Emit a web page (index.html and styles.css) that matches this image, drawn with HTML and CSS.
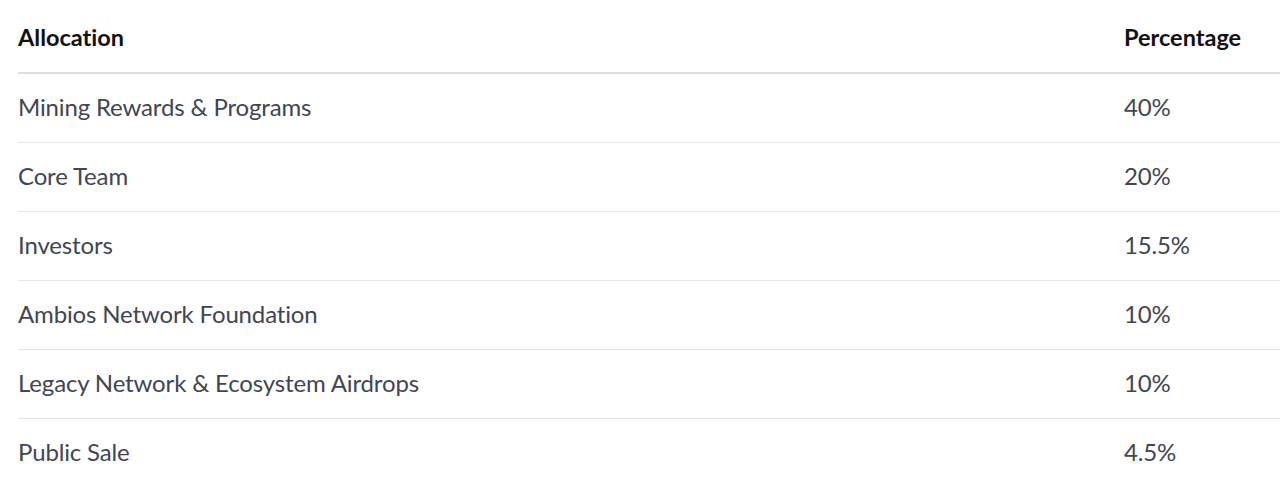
FILE: index.html
```html
<!DOCTYPE html>
<html lang="en">
<head>
<meta charset="utf-8">
<title>Allocation</title>
<link rel="stylesheet" href="styles.css">
</head>
<body>
<table class="alloc">
  <thead>
    <tr><th class="col-name">Allocation</th><th class="col-pct">Percentage</th></tr>
  </thead>
  <tbody>
    <tr><td>Mining Rewards &amp; Programs</td><td>40%</td></tr>
    <tr><td>Core Team</td><td>20%</td></tr>
    <tr><td>Investors</td><td>15.5%</td></tr>
    <tr><td>Ambios Network Foundation</td><td>10%</td></tr>
    <tr><td>Legacy Network &amp; Ecosystem Airdrops</td><td>10%</td></tr>
    <tr><td>Public Sale</td><td>4.5%</td></tr>
  </tbody>
</table>
</body>
</html>
```
FILE: styles.css
```css
html, body {
  margin: 0;
  padding: 0;
  background: #ffffff;
}
body {
  padding-left: 18px;
  font-family: "Lato", "Liberation Sans", sans-serif;
  font-variant-ligatures: none;
}
.alloc {
  width: 100%;
  border-collapse: collapse;
}
.alloc th {
  text-align: left;
  font-weight: 700;
  font-size: 23.5px;
  color: #111111;
  letter-spacing: 0;
  line-height: 32px;
  padding: 21px 0 19px 0;
  border-bottom: 2px solid #dedede;
}
.alloc .col-pct {
  width: 156px;
}
.alloc td {
  font-size: 24px;
  color: #414652;
  line-height: 32px;
  padding: 17px 0 19px 0;
  border-bottom: 1px solid #e6e6e6;
  letter-spacing: -0.15px;
}
.alloc tbody tr:last-child td {
  border-bottom: none;
}
```
